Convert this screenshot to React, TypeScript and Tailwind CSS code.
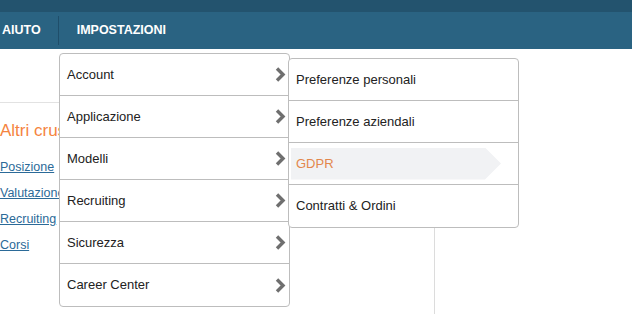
import { ReactNode } from "react";

const mainItems = [
  "Account",
  "Applicazione",
  "Modelli",
  "Recruiting",
  "Sicurezza",
  "Career Center",
];

const subItems = [
  "Preferenze personali",
  "Preferenze aziendali",
  "GDPR",
  "Contratti & Ordini",
];

const links = ["Posizione", "Valutazione", "Recruiting", "Corsi"];

const Chevron = () => (
  <svg width="11" height="15" viewBox="0 0 11 15" className="shrink-0">
    <polyline
      points="2,1.5 8,7.5 2,13.5"
      fill="none"
      stroke="#6f6f6f"
      strokeWidth="3.4"
    />
  </svg>
);

const Row: React.FC<{ children: ReactNode; last?: boolean }> = ({
  children,
  last,
}) => (
  <div
    className={`flex h-[42px] items-center ${
      last ? "" : "border-b border-[#bdbdbd]"
    }`}
  >
    {children}
  </div>
);

const App = () => {
  return (
    <div
      className="relative w-[632px] h-[314px] overflow-hidden bg-white"
      style={{ fontFamily: '"Liberation Sans", Arial, sans-serif' }}
    >
      <div className="h-[12px] bg-[#23536e]" />
      <nav className="flex h-[37px] items-stretch bg-[#2a6382] text-[12.5px] font-bold text-white">
        <div className="flex items-center pl-[2px] pr-[17px]">AIUTO</div>
        <div className="my-[4px] w-px bg-[#1f4e6a]" />
        <div className="flex items-center pl-[18px]">IMPOSTAZIONI</div>
      </nav>

      <div className="flex">
        <div className="w-[434px] shrink-0">
          <div className="mt-[53px] w-[220px] border-t border-[#e2e2e2]" />
          <div className="mt-[18px] text-[17px] leading-[20px] text-[#f5843f]">
            Altri cruscotti
          </div>
          <div className="mt-[18px] flex flex-col gap-[9px] text-[12.5px] leading-[17px]">
            {links.map((l) => (
              <a key={l} href="#" className="text-[#2b6a98] underline">
                {l}
              </a>
            ))}
          </div>
        </div>
        <div className="mt-[177px] h-[120px] w-px bg-[#dcdcdc]" />
      </div>

      <div className="absolute left-[59px] top-[53px] w-[231px] rounded-[4px] border border-[#bdbdbd] bg-white text-[13px] text-[#222]">
        {mainItems.map((item, i) => (
          <Row key={item} last={i === mainItems.length - 1}>
            <span className="flex-1 pl-[7px]">{item}</span>
            <span className="pr-[3px]">
              <Chevron />
            </span>
          </Row>
        ))}
      </div>

      <div className="absolute left-[288px] top-[58px] w-[231px] rounded-[4px] border border-[#bdbdbd] bg-white text-[13px] text-[#222]">
        {subItems.map((item, i) => (
          <Row key={item} last={i === subItems.length - 1}>
            {item === "GDPR" ? (
              <div className="ml-[2px] flex h-[32px] w-[210px] items-center bg-[#f1f2f4] pl-[5px] text-[#e3874d] [clip-path:polygon(0_0,194px_0,100%_50%,194px_100%,0_100%)]">
                {item}
              </div>
            ) : (
              <span className="pl-[7px]">{item}</span>
            )}
          </Row>
        ))}
      </div>
    </div>
  );
};

export default App;
